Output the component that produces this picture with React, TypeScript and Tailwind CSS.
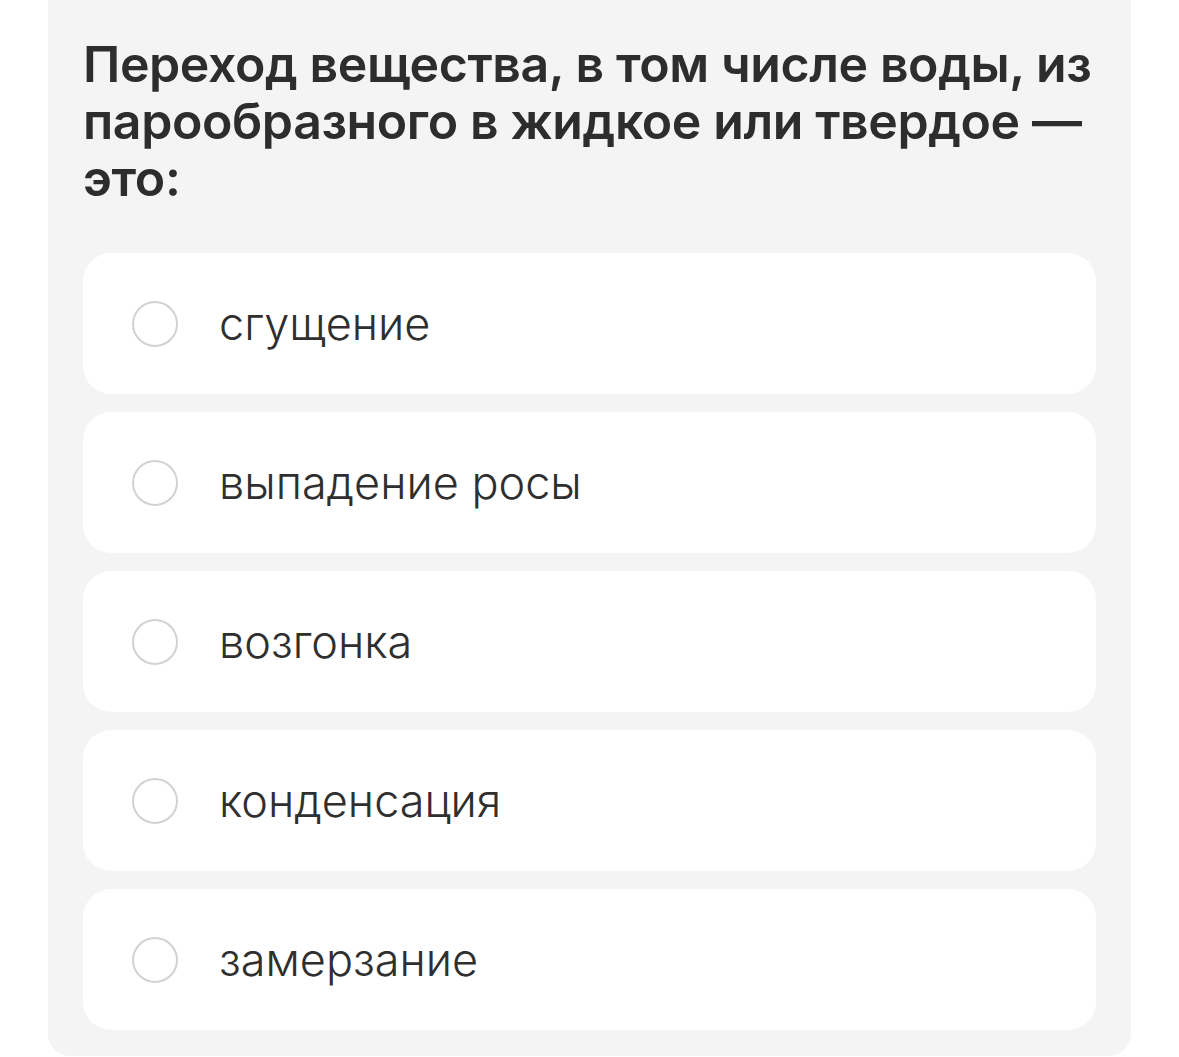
import React from "react";

const options = ["сгущение", "выпадение росы", "возгонка", "конденсация", "замерзание"];

export default function App() {
  return (
    <div className="min-h-[1057px] w-[1179px] bg-white" style={{ fontFamily: "Inter, 'Noto Sans', sans-serif" }}>
      <div className="ml-[48px] w-[1083px] rounded-b-[22px] bg-[#f4f4f4] px-[35px] pb-[26px] pt-[36px]">
        <h1 className="text-[50px] font-semibold leading-[57px] tracking-[-0.4px] text-[#2d2d2d]">
          Переход вещества, в том числе воды, из парообразного в жидкое или твердое — это:
        </h1>
        <div className="mt-[46px] flex flex-col gap-[18px]">
          {options.map((o) => (
            <div key={o} className="flex h-[141px] items-center rounded-[28px] bg-white pl-[49px]">
              <div className="h-[46px] w-[46px] shrink-0 rounded-full border-2 border-[#d2d2d2]" />
              <span className="ml-[41px] text-[45px] font-light leading-none text-[#2f2f2f]">{o}</span>
            </div>
          ))}
        </div>
      </div>
    </div>
  );
}
